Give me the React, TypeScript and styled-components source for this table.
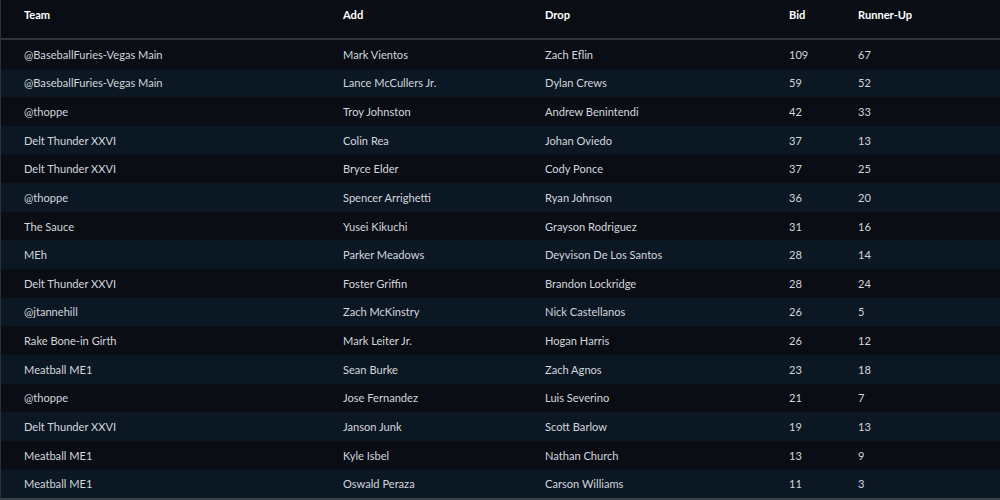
import React from "react";
import styled, { createGlobalStyle } from "styled-components";

const GlobalStyle = createGlobalStyle`
  html, body {
    margin: 0;
    padding: 0;
    background: #0a0d14;
  }
  body {
    font-family: Lato, "Open Sans", sans-serif;
  }
`;

const Page = styled.div`
  width: 1000px;
  height: 500px;
  overflow: hidden;
  background: #0a0d14;
`;

const Table = styled.div`
  border-left: 1px solid #2b303a;
  border-bottom: 2px solid #3a3f48;
`;

const Row = styled.div<{ $alt?: boolean }>`
  display: grid;
  grid-template-columns: 319px 202px 244px 69px 1fr;
  align-items: center;
  height: 28.63px;
  padding-left: 23px;
  background: ${({ $alt }) => ($alt ? "#0c1724" : "#0a0d14")};
  color: #d2d6dc;
  font-size: 11.1px;
`;

const HeaderRow = styled(Row)`
  height: 40px;
  align-items: start;
  padding-top: 8px;
  box-sizing: border-box;
  border-bottom: 2px solid #2e333c;
  color: #ffffff;
  font-weight: 700;
`;

const Cell = styled.div`
  white-space: nowrap;
`;

interface Claim {
  team: string;
  add: string;
  drop: string;
  bid: number;
  runnerUp: number;
}

const claims: Claim[] = [
  { team: "@BaseballFuries-Vegas Main", add: "Mark Vientos", drop: "Zach Eflin", bid: 109, runnerUp: 67 },
  { team: "@BaseballFuries-Vegas Main", add: "Lance McCullers Jr.", drop: "Dylan Crews", bid: 59, runnerUp: 52 },
  { team: "@thoppe", add: "Troy Johnston", drop: "Andrew Benintendi", bid: 42, runnerUp: 33 },
  { team: "Delt Thunder XXVI", add: "Colin Rea", drop: "Johan Oviedo", bid: 37, runnerUp: 13 },
  { team: "Delt Thunder XXVI", add: "Bryce Elder", drop: "Cody Ponce", bid: 37, runnerUp: 25 },
  { team: "@thoppe", add: "Spencer Arrighetti", drop: "Ryan Johnson", bid: 36, runnerUp: 20 },
  { team: "The Sauce", add: "Yusei Kikuchi", drop: "Grayson Rodriguez", bid: 31, runnerUp: 16 },
  { team: "MEh", add: "Parker Meadows", drop: "Deyvison De Los Santos", bid: 28, runnerUp: 14 },
  { team: "Delt Thunder XXVI", add: "Foster Griffin", drop: "Brandon Lockridge", bid: 28, runnerUp: 24 },
  { team: "@jtannehill", add: "Zach McKinstry", drop: "Nick Castellanos", bid: 26, runnerUp: 5 },
  { team: "Rake Bone-in Girth", add: "Mark Leiter Jr.", drop: "Hogan Harris", bid: 26, runnerUp: 12 },
  { team: "Meatball ME1", add: "Sean Burke", drop: "Zach Agnos", bid: 23, runnerUp: 18 },
  { team: "@thoppe", add: "Jose Fernandez", drop: "Luis Severino", bid: 21, runnerUp: 7 },
  { team: "Delt Thunder XXVI", add: "Janson Junk", drop: "Scott Barlow", bid: 19, runnerUp: 13 },
  { team: "Meatball ME1", add: "Kyle Isbel", drop: "Nathan Church", bid: 13, runnerUp: 9 },
  { team: "Meatball ME1", add: "Oswald Peraza", drop: "Carson Williams", bid: 11, runnerUp: 3 },
];

const App = () => {
  return (
    <Page>
      <GlobalStyle />
      <Table>
        <HeaderRow>
          <Cell>Team</Cell>
          <Cell>Add</Cell>
          <Cell>Drop</Cell>
          <Cell>Bid</Cell>
          <Cell>Runner-Up</Cell>
        </HeaderRow>
        {claims.map((c, i) => (
          <Row key={i} $alt={i % 2 === 1}>
            <Cell>{c.team}</Cell>
            <Cell>{c.add}</Cell>
            <Cell>{c.drop}</Cell>
            <Cell>{c.bid}</Cell>
            <Cell>{c.runnerUp}</Cell>
          </Row>
        ))}
      </Table>
    </Page>
  );
};

export default App;
